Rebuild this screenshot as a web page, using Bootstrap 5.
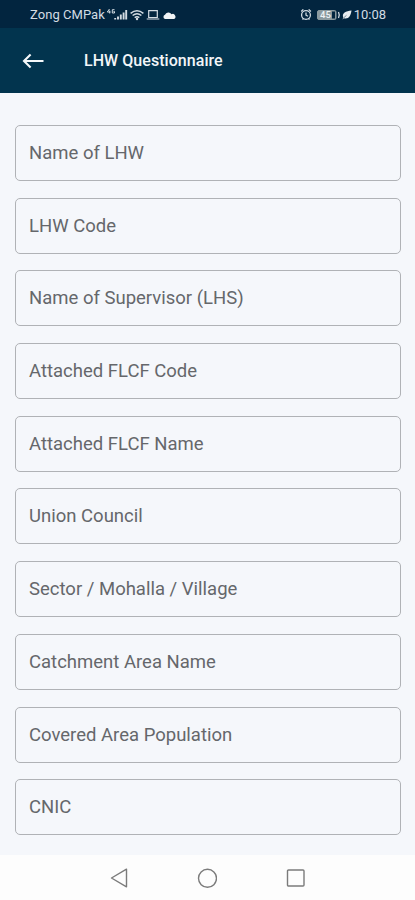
<!DOCTYPE html>
<html lang="en">
<head>
<meta charset="utf-8">
<meta name="viewport" content="width=device-width, initial-scale=1">
<title>LHW Questionnaire</title>
<link href="https://cdn.jsdelivr.net/npm/bootstrap@5.3.0/dist/css/bootstrap.min.css" rel="stylesheet">
<style>
body{font-family:Roboto,"Liberation Sans",sans-serif;background:#f5f7fb;height:900px;overflow:hidden}
svg{display:block;flex:none}
.status-bar{height:28px;background:#02253f;color:#d3dce3;font-size:13px;padding:1px 29px 0 30px}
.status-bar span{line-height:28px;white-space:nowrap}
.carrier{letter-spacing:.05px}
.app-bar{height:64.5px;background:#02344e;padding:2px 22px 0}
.app-title{font-size:16px;font-weight:500;line-height:24px;margin-left:39px;color:#f2f6f8;letter-spacing:.05px}
.fields{padding:32.5px 14.5px 0;gap:16.7px}
.fields .form-control{height:56px;flex:none;border:1.4px solid #b0b2b6;border-radius:5px;background:transparent;color:#65676b;font-size:18.5px;line-height:55px;padding:0 13.5px;letter-spacing:0}
.nav-keys{height:45px;background:#fdfdfd;padding:0 110px}
</style>
</head>
<body class="d-flex flex-column m-0">
<div class="status-bar d-flex align-items-center flex-shrink-0">
  <span class="carrier">Zong CMPak</span>
  <svg width="72" height="16" viewBox="0 0 72 16" fill="none" stroke="#d3dce3">
    <path d="M4.500 2L2.300 5H5.500M4.700 3.500V6.500M9.500 2.700H7.300V6H9.500V4.500H8.500" stroke-width="1"/>
    <path d="M10.200 12.500V11M13 12.500V9.500M15.800 12.500V7.500M18.600 12.500V5.500M21.200 12.500V3" stroke-width="1.900"/>
    <path d="M25.600 6.300Q32 1.200 38.400 6.300M27.600 8.500Q32 5 36.400 8.500M29.700 10.700Q32 8.900 34.300 10.700" stroke-width="1.500"/>
    <circle cx="32" cy="12" r="1.200" fill="#d3dce3" stroke="none"/>
    <path d="M43.700 3.700H52.300V10.500H43.700ZM41.700 12H54.300" stroke-width="1.200"/>
    <path d="M60 12A2.200 2.200 0 0 1 60 7.800A3.600 3.600 0 0 1 66.500 7.300A2.500 2.500 0 0 1 69 12Z" fill="#f1f4f6" stroke="none"/>
  </svg>
  <svg class="ms-auto" width="53" height="16" viewBox="0 0 53 16" fill="none" stroke="#d3dce3">
    <g transform="translate(-1 0)">
    <circle cx="6" cy="8" r="4.400" stroke-width="1.300"/>
    <path d="M6 5.500V8.200L8 9.300M1.200 4.500L3.300 2.400M10.900 4.500L8.700 2.400M2.500 12.500L3.500 11.500M9.500 12.500L8.500 11.500" stroke-width="1.300"/>
    <rect x="17.500" y="3.500" width="18.500" height="9" rx="1.500" fill="#8b9a9f" stroke="#8b9a9f" stroke-width="1"/>
    <rect x="32" y="4.500" width="3" height="7" fill="#02253f" stroke="none"/>
    <path d="M38.500 5Q40 8 38.500 11" stroke-width="1.300"/>
    <text x="25.500" y="11.300" text-anchor="middle" font-size="9.500" font-weight="500" fill="#eef2f4" stroke="none">45</text>
    <path d="M42.500 12.500L43.300 10.500C41.500 6 46 4 51.500 3.500C51 8.500 48.500 12.500 44 11.300Z" fill="#e8edf0" stroke="none"/>
    <path d="M43.500 11L46.500 8.300" stroke="#02253f" stroke-width=".5"/>
    </g>
  </svg>
  <span class="clock">10:08</span>
</div>
<header class="app-bar d-flex align-items-center flex-shrink-0">
  <svg width="23" height="18" viewBox="0 0 23 18" fill="none" stroke="#f5f8fa" stroke-width="2.100"><path d="M21.500 9H2M8.600 2.500L2 9L8.600 15.500"/></svg>
  <h1 class="app-title mb-0">LHW Questionnaire</h1>
</header>
<main class="fields d-flex flex-column flex-grow-1">
  <label class="form-control">Name of LHW</label>
  <label class="form-control">LHW Code</label>
  <label class="form-control">Name of Supervisor (LHS)</label>
  <label class="form-control">Attached FLCF Code</label>
  <label class="form-control">Attached FLCF Name</label>
  <label class="form-control">Union Council</label>
  <label class="form-control">Sector / Mohalla / Village</label>
  <label class="form-control">Catchment Area Name</label>
  <label class="form-control">Covered Area Population</label>
  <label class="form-control">CNIC</label>
</main>
<footer class="nav-keys d-flex align-items-center justify-content-between flex-shrink-0">
  <svg width="18" height="20" viewBox="0 0 18 20" fill="none" stroke="#7b7b7b" stroke-width="1.400" stroke-linejoin="round"><path d="M16.500 1.200V18.800L1.500 10Z"/></svg>
  <svg width="20" height="20" viewBox="0 0 20 20" fill="none" stroke="#7b7b7b" stroke-width="1.400"><circle cx="10.500" cy="10.300" r="9"/></svg>
  <svg width="19" height="20" viewBox="0 0 19 20" fill="none" stroke="#7b7b7b" stroke-width="1.400"><rect x="1.500" y="2" width="16.500" height="16" rx="1"/></svg>
</footer>
<script src="https://cdn.jsdelivr.net/npm/bootstrap@5.3.0/dist/js/bootstrap.bundle.min.js"></script>
</body>
</html>
